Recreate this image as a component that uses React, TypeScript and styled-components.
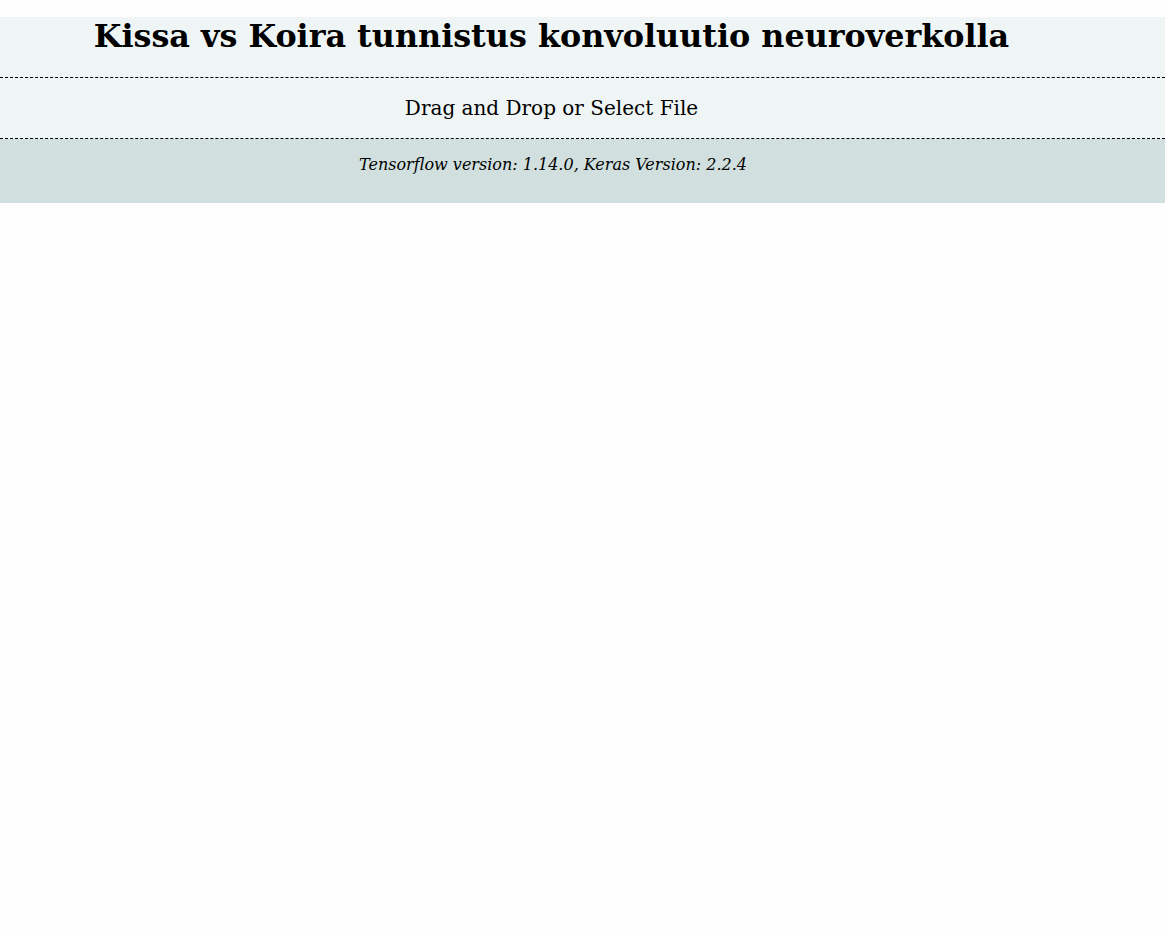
import React from 'react';
import styled, { createGlobalStyle } from 'styled-components';

const GlobalStyle = createGlobalStyle`
  html, body {
    margin: 0;
    padding: 0;
    background: #fefefe;
  }
  body {
    padding-top: 17px;
    font-family: 'DejaVu Serif', serif;
    color: #000;
  }
`;

const Page = styled.div`
  display: flex;
  flex-direction: column;
  width: 100%;
`;

const Header = styled.header`
  height: 60px;
  background: #eff5f5;
  padding-right: 62px;
`;

const Title = styled.h1`
  margin: 0;
  font-size: 31.8px;
  font-weight: bold;
  line-height: 38px;
  text-align: center;
`;

const DropZone = styled.div`
  height: 60px;
  line-height: 60px;
  background: #eff5f5;
  border-top: 1px dashed #000;
  border-bottom: 1px dashed #000;
  padding-right: 62px;
  font-size: 20px;
  text-align: center;
  cursor: pointer;
`;

const Footer = styled.footer`
  height: 64px;
  background: #d1e0df;
  padding-right: 59px;
`;

const VersionInfo = styled.p`
  margin: 0;
  padding-top: 16px;
  font-size: 16px;
  line-height: 19px;
  font-style: italic;
  text-align: center;
`;

export default function App() {
  return (
    <>
      <GlobalStyle />
      <Page>
        <Header>
          <Title>Kissa vs Koira tunnistus konvoluutio neuroverkolla</Title>
        </Header>
        <DropZone>Drag and Drop or Select File</DropZone>
        <Footer>
          <VersionInfo>Tensorflow version: 1.14.0, Keras Version: 2.2.4</VersionInfo>
        </Footer>
      </Page>
    </>
  );
}
